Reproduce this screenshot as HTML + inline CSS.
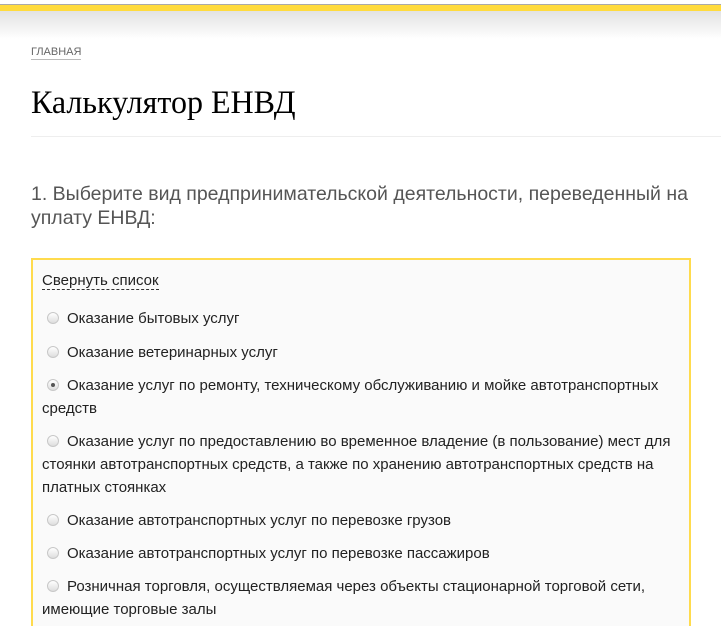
<!DOCTYPE html>
<html><head><meta charset="utf-8"><style>
html,body{margin:0;width:721px;height:626px;overflow:hidden}
body{background:#fff;font-family:"Liberation Sans",Arial,sans-serif;position:relative}
.top{position:absolute;left:0;top:0;width:721px;height:4px;background:#fff;border-bottom:1px solid #aaa}
.yel{position:absolute;left:0;top:5px;width:721px;height:6px;background:#ffdb3d}
.sh{position:absolute;left:0;top:11px;width:721px;height:28px;background:linear-gradient(#e2e2e2,#fff)}
.bc{position:absolute;left:31px;top:46px;font-size:11px;color:#666;border-bottom:1px solid #bbb;line-height:13px}
h1{position:absolute;left:31px;top:83px;margin:0;font:400 33px "Liberation Serif",serif;color:#000;line-height:40px;transform:scaleX(0.97);transform-origin:left}
.hr{position:absolute;left:31px;top:136px;width:690px;height:1px;background:#eee}
.q{position:absolute;left:31px;top:182px;width:680px;font-size:19.5px;color:#555;line-height:24px}
.box{position:absolute;left:31px;top:258px;width:656px;height:368px;border:2px solid #ffdb4d;border-bottom:0;background:#fafafa}
.t{position:absolute;left:42px;font-size:15px;color:#222;line-height:23px;width:640px}
.t .r{display:inline-block;width:12px;height:12px;border-radius:50%;border:1px solid #c8c8c8;background:linear-gradient(#fff,#ddd);margin:0 8px 0 5px;vertical-align:-1px;position:relative;box-sizing:border-box}
.t .r.on::after{content:"";position:absolute;left:3px;top:3px;width:4px;height:4px;border-radius:50%;background:#555}
.tog{border-bottom:1px dashed #333}
</style></head><body>
<div class="top"></div><div class="yel"></div><div class="sh"></div>
<div class="bc">ГЛАВНАЯ</div>
<h1>Калькулятор ЕНВД</h1>
<div class="hr"></div>
<div class="q">1. Выберите вид предпринимательской деятельности, переведенный на уплату ЕНВД:</div>
<div class="box"></div>
<div class="t" style="top:269px"><span class="tog">Свернуть список</span></div>
<div class="t" style="top:307px"><span class="r"></span>Оказание бытовых услуг</div>
<div class="t" style="top:341px"><span class="r"></span>Оказание ветеринарных услуг</div>
<div class="t" style="top:374px"><span class="r on"></span>Оказание услуг по ремонту, техническому обслуживанию и мойке автотранспортных средств</div>
<div class="t" style="top:430px"><span class="r"></span>Оказание услуг по предоставлению во временное владение (в пользование) мест для стоянки автотранспортных средств, а также по хранению автотранспортных средств на платных стоянках</div>
<div class="t" style="top:509px"><span class="r"></span>Оказание автотранспортных услуг по перевозке грузов</div>
<div class="t" style="top:542px"><span class="r"></span>Оказание автотранспортных услуг по перевозке пассажиров</div>
<div class="t" style="top:575px"><span class="r"></span>Розничная торговля, осуществляемая через объекты стационарной торговой сети, имеющие торговые залы</div>
</body></html>
